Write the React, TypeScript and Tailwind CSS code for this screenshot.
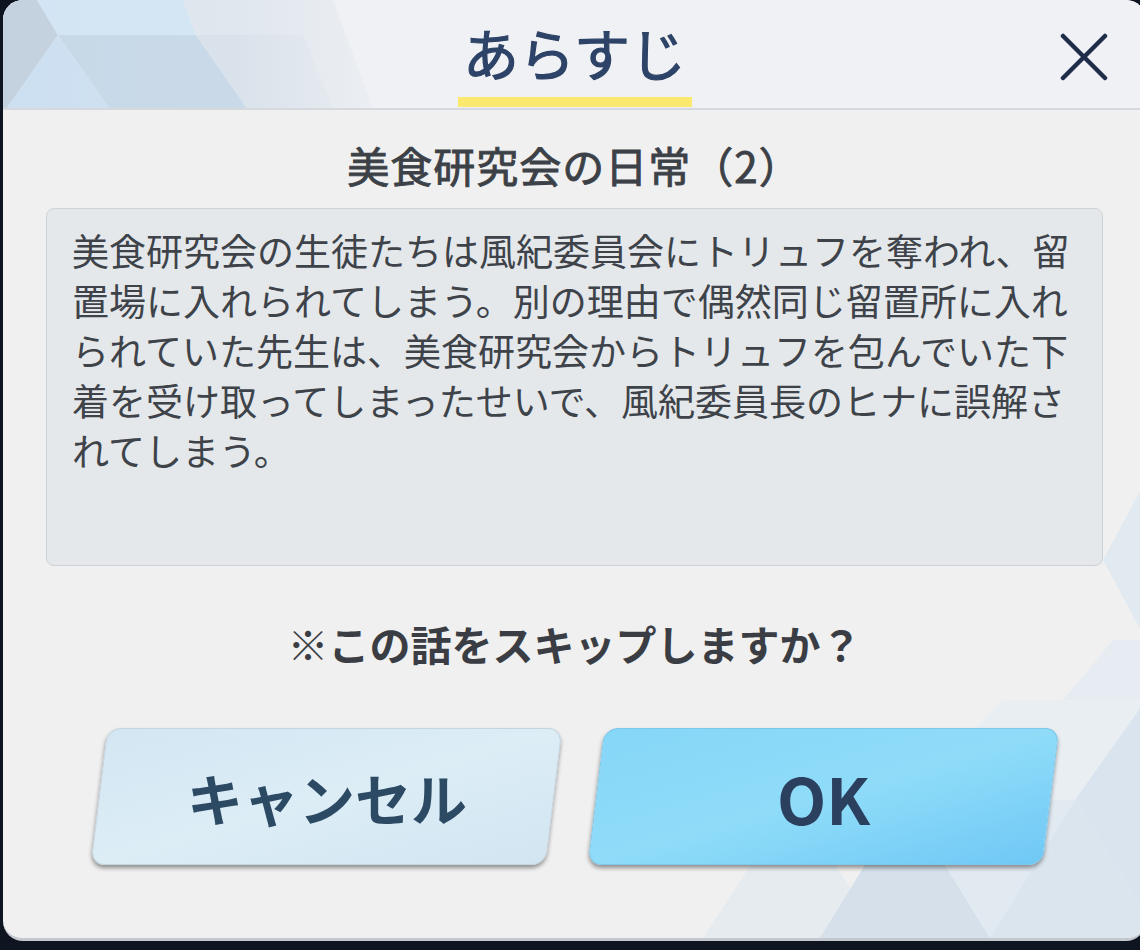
import { ReactNode } from "react";

const lines = [
  "美食研究会の生徒たちは風紀委員会にトリュフを奪われ、留",
  "置場に入れられてしまう。別の理由で偶然同じ留置所に入れ",
  "られていた先生は、美食研究会からトリュフを包んでいた下",
  "着を受け取ってしまったせいで、風紀委員長のヒナに誤解さ",
  "れてしまう。",
];

function HeaderPattern() {
  return (
    <svg className="pointer-events-none absolute left-0 top-0" width="420" height="108" viewBox="0 0 420 108">
      <defs>
        <linearGradient id="fade" x1="0" y1="0" x2="1" y2="0">
          <stop offset="0" stopColor="#eff1f4" stopOpacity="0" />
          <stop offset="0.55" stopColor="#eff1f4" stopOpacity="0.05" />
          <stop offset="1" stopColor="#eff1f4" stopOpacity="1" />
        </linearGradient>
      </defs>
      <polygon points="0,0 34,0 55,35 4,108 0,108" fill="#c4d1de" />
      <polygon points="34,0 180,0 193,35 55,35" fill="#d3e5f4" />
      <polygon points="55,35 106,108 4,108" fill="#cde0f1" />
      <polygon points="55,35 193,35 244,108 106,108" fill="#c7d8e8" />
      <polygon points="180,0 330,0 370,108 244,108 193,35" fill="#dfe6ee" />
      <polygon points="193,35 300,35 330,108 244,108" fill="#d8e1ea" />
      <rect x="0" y="0" width="420" height="108" fill="url(#fade)" />
    </svg>
  );
}

function BodyPattern() {
  return (
    <svg className="pointer-events-none absolute inset-0" width="1143" height="941" viewBox="0 0 1143 941">
      <polygon points="700,938 790,800 880,938" fill="#e6ebf0" />
      <polygon points="817,938 902,800 987,938" fill="#d5e0ea" />
      <polygon points="902,800 1072,800 987,938" fill="#e1e9f1" />
      <polygon points="987,938 1072,800 1143,915 1143,938" fill="#dbe5ee" />
      <polygon points="1072,800 1143,690 1143,915" fill="#d9e4ee" />
      <polygon points="1000,700 1143,700 1072,800 902,800" fill="#e9eef3" />
      <polygon points="1100,560 1143,480 1143,640" fill="#e2eaf1" />
      <polygon points="1110,640 1143,640 1143,700 1060,700" fill="#e6ecf2" />
    </svg>
  );
}

function SkewButton({ children, ok }: { children: ReactNode; ok?: boolean }) {
  return (
    <button
      className={`flex h-[137px] w-[455px] skew-x-[-7deg] items-center justify-center rounded-[14px] border shadow-[0_3px_4px_rgba(0,0,0,0.4)] ${
        ok
          ? "border-[#7cc7ea] bg-linear-to-br from-[#86d6f8] via-[#8fdcf9] to-[#6fc8f5]"
          : "border-[#c3d5e1] bg-linear-to-br from-[#d3e6f2] via-[#dcedf6] to-[#d2e5f1]"
      }`}
    >
      <span className="skew-x-[7deg]">{children}</span>
    </button>
  );
}

export default function App() {
  return (
    <div className="flex h-[950px] w-[1140px] overflow-hidden bg-[#0e1420] pl-[3px] font-['Noto_Sans_CJK_JP','Noto_Sans',sans-serif]">
      <div className="relative flex h-[941px] w-[1143px] shrink-0 flex-col overflow-hidden rounded-[20px] border-b-[3px] border-[#c3c8ce] bg-[#f0f0f0]">
        <BodyPattern />
        <header className="relative flex h-[110px] shrink-0 flex-col items-center justify-end border-b-2 border-[#d5d8dc] bg-[#eff1f4]">
          <HeaderPattern />
          <h1 className="relative mb-[17px] text-[56px] font-normal leading-none text-[#2d4367] [-webkit-text-stroke:1.2px_#2d4367]">あらすじ</h1>
          <div className="relative mb-[1px] h-[10px] w-[234px] bg-[#fbe86e]" />
          <button className="absolute right-[38px] top-[33px]">
            <svg width="48" height="48" viewBox="0 0 48 48" fill="none" stroke="#1f2d4b" strokeWidth="4.5" strokeLinecap="round">
              <path d="M3 3 45 45M45 3 3 45" />
            </svg>
          </button>
        </header>
        <div className="relative flex flex-1 flex-col items-center px-[43px]">
          <h2 className="mt-[34px] text-[42px] font-normal leading-none tracking-[1px] text-[#3c4147] [-webkit-text-stroke:0.9px_#3c4147]">美食研究会の日常（2）</h2>
          <div className="mt-[22px] h-[358px] w-full rounded-[8px] border border-[#cdd2d8] bg-[#e4e8eb] pl-[25px] pt-[16px] text-[37px] leading-[50px] text-[#3e434a]">
            {lines.map((l) => (
              <div key={l} className="whitespace-nowrap">{l}</div>
            ))}
          </div>
          <p className="mt-[57px] text-[41px] font-bold leading-none text-[#3a3e44]">※この話をスキップしますか？</p>
          <div className="mt-[64px] flex gap-[42px]">
            <SkewButton>
              <span className="text-[56px] font-bold text-[#2c4a64]">キャンセル</span>
            </SkewButton>
            <SkewButton ok>
              <span className="text-[64px] font-bold text-[#2b3f5e]">OK</span>
            </SkewButton>
          </div>
        </div>
      </div>
    </div>
  );
}
